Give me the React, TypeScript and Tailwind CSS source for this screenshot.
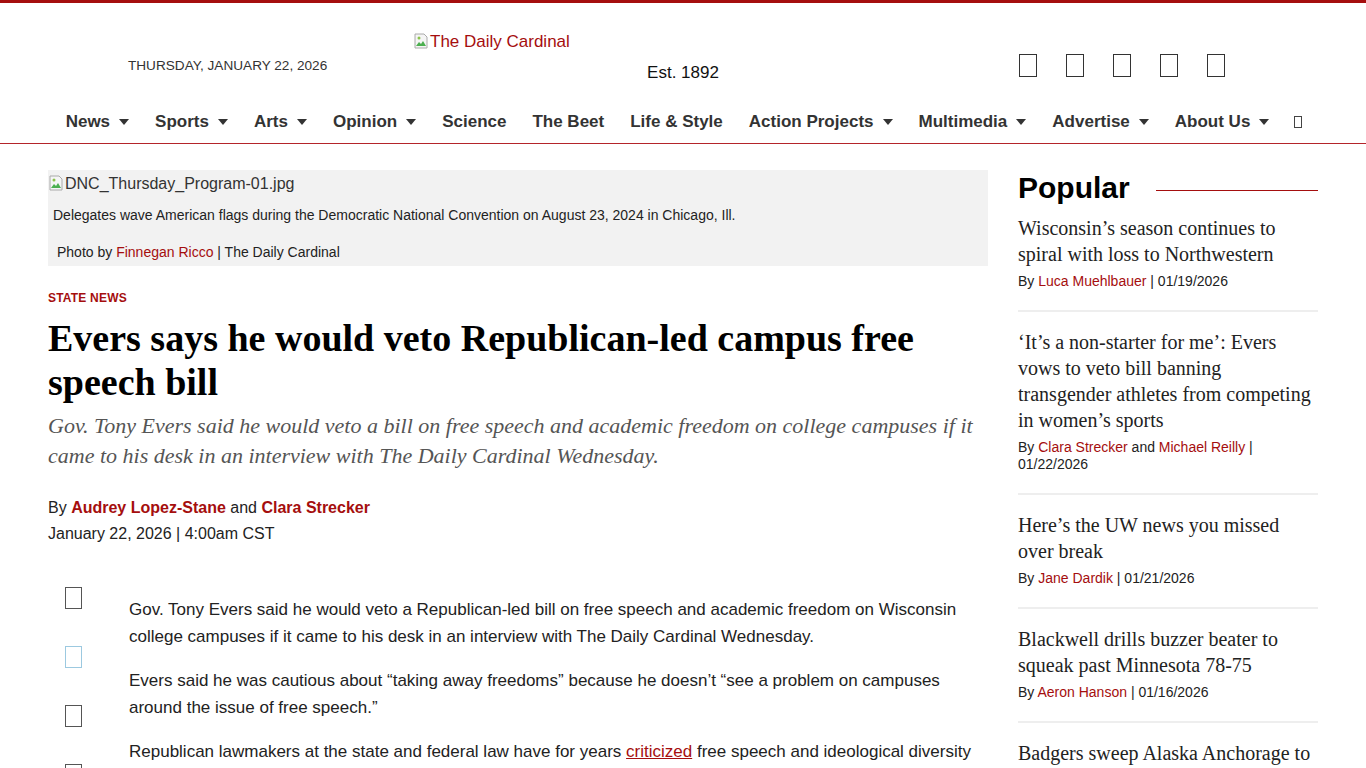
import React from 'react';

const navItems: { label: string; caret: boolean }[] = [
  { label: 'News', caret: true },
  { label: 'Sports', caret: true },
  { label: 'Arts', caret: true },
  { label: 'Opinion', caret: true },
  { label: 'Science', caret: false },
  { label: 'The Beet', caret: false },
  { label: 'Life & Style', caret: false },
  { label: 'Action Projects', caret: true },
  { label: 'Multimedia', caret: true },
  { label: 'Advertise', caret: true },
  { label: 'About Us', caret: true },
];

const popular = [
  {
    title: 'Wisconsin\u2019s season continues to spiral with loss to Northwestern',
    authors: ['Luca Muehlbauer'],
    date: '01/19/2026',
  },
  {
    title: '\u2018It\u2019s a non-starter for me\u2019: Evers vows to veto bill banning transgender athletes from competing in women\u2019s sports',
    authors: ['Clara Strecker', 'Michael Reilly'],
    date: '01/22/2026',
  },
  {
    title: 'Here\u2019s the UW news you missed over break',
    authors: ['Jane Dardik'],
    date: '01/21/2026',
  },
  {
    title: 'Blackwell drills buzzer beater to squeak past Minnesota 78-75',
    authors: ['Aeron Hanson'],
    date: '01/16/2026',
  },
  {
    title: 'Badgers sweep Alaska Anchorage to extend win streak',
    authors: ['Staff'],
    date: '01/18/2026',
  },
];

const serif = { fontFamily: '"Liberation Serif", "Times New Roman", serif' };

const BrokenImg = () => (
  <svg width="16" height="16" viewBox="0 0 16 16" className="inline-block align-[-2px] mr-[1px]">
    <path d="M2 1h9l3 3v11H2z" fill="#f5f5f5" stroke="#aaa" strokeWidth="1" />
    <path d="M3 13l3-4 2 2 2-3 3 5z" fill="#4caf50" />
    <circle cx="6" cy="5" r="1.5" fill="#8bc34a" />
  </svg>
);

const Tofu = ({ className }: { className: string }) => (
  <span className={`inline-block border ${className}`} />
);

export default function App() {
  return (
    <div className="bg-white min-h-screen text-[#222]" style={{ fontFamily: '"Liberation Sans", Arial, sans-serif' }}>
      <div className="h-[3px] bg-[#a50e0e]" />

      {/* masthead */}
      <header className="border-b border-[#b4242a]">
        <div className="w-[1270px] mx-auto flex h-[97px]">
          <div className="w-[365px] pl-[80px] pt-[53px] text-[13.6px] text-[#333] uppercase leading-[20px]">
            Thursday, January 22, 2026
          </div>
          <div className="w-[540px] pt-[29px] flex flex-col">
            <div className="text-[17px] leading-[20px] text-[#a50e0e]">
              <BrokenImg />The Daily Cardinal
            </div>
            <div className="mt-[11px] text-center text-[17px] leading-[20px] text-[#111]">Est. 1892</div>
          </div>
          <div className="flex-1 pl-[66px] pt-[51px] flex gap-[29px]">
            {[0, 1, 2, 3, 4].map((i) => (
              <Tofu key={i} className="w-[18px] h-[23px] border-[#333]" />
            ))}
          </div>
        </div>
        <nav className="h-[43px] flex items-center justify-center gap-[26px] pl-[2px]">
          {navItems.map((n) => (
            <span key={n.label} className="flex items-center text-[17px] font-bold text-[#333]">
              {n.label}
              {n.caret && (
                <svg width="10" height="6" viewBox="0 0 10 6" className="ml-[9px]">
                  <path d="M0 0h10L5 6z" fill="#333" />
                </svg>
              )}
            </span>
          ))}
          <Tofu className="w-[8px] h-[12px] border-[#444] ml-[-1px]" />
        </nav>
      </header>

      {/* content */}
      <main className="w-[1270px] mx-auto flex gap-[30px] pt-[26px]">
        <article className="w-[940px]">
          <figure className="bg-[#f2f2f2] pt-[2px] pb-[6px]">
            <div className="text-[16px] leading-[24px] text-[#333]">
              <BrokenImg />DNC_Thursday_Program-01.jpg
            </div>
            <figcaption className="pl-[5px] pt-[11px] text-[14px] leading-[16px] text-[#222]">
              Delegates wave American flags during the Democratic National Convention on August 23, 2024 in Chicago, Ill.
            </figcaption>
            <div className="pl-[9px] pt-[21px] text-[14px] leading-[16px] text-[#222]">
              Photo by <span className="text-[#a50e0e]">Finnegan Ricco</span> | The Daily Cardinal
            </div>
          </figure>

          <div className="mt-[25px] text-[12px] font-bold uppercase text-[#a50e0e] leading-[14px] tracking-[0.2px]">State News</div>
          <h1 className="mt-[11px] text-[38px] font-bold leading-[44px] text-black" style={serif}>
            Evers says he would veto Republican-led campus free speech bill
          </h1>
          <p className="mt-[7px] text-[22px] italic leading-[30px] text-[#555]" style={serif}>
            Gov. Tony Evers said he would veto a bill on free speech and academic freedom on college campuses if it came to his desk in an interview with The Daily Cardinal Wednesday.
          </p>

          <div className="mt-[24px] text-[16px] leading-[26px] text-[#222]">
            By <span className="font-bold text-[#a50e0e]">Audrey Lopez-Stane</span> and{' '}
            <span className="font-bold text-[#a50e0e]">Clara Strecker</span>
            <div>January 22, 2026 | 4:00am CST</div>
          </div>

          <div className="mt-[20px] flex">
            <div className="w-[81px] pl-[17px] pt-[20px] flex flex-col gap-[37px]">
              <Tofu className="w-[17px] h-[22px] border-[#555]" />
              <Tofu className="w-[17px] h-[22px] border-[#9cc9e0]" />
              <Tofu className="w-[17px] h-[22px] border-[#555]" />
              <Tofu className="w-[17px] h-[22px] border-[#555]" />
            </div>
            <div className="flex-1 pt-[29px] text-[17px] leading-[27px] text-[#222] pr-[10px]">
              <p>
                Gov. Tony Evers said he would veto a Republican-led bill on free speech and academic freedom on Wisconsin college campuses if it came to his desk in an interview with The Daily Cardinal Wednesday.
              </p>
              <p className="mt-[17px]">
                Evers said he was cautious about {'\u201C'}taking away freedoms{'\u201D'} because he doesn{'\u2019'}t {'\u201C'}see a problem on campuses around the issue of free speech.{'\u201D'}
              </p>
              <p className="mt-[17px]">
                Republican lawmakers at the state and federal law have for years{' '}
                <span className="text-[#a50e0e] underline">criticized</span> free speech and ideological diversity on college campuses across the country.
              </p>
            </div>
          </div>
        </article>

        <aside className="w-[300px]">
          <div className="flex items-center">
            <h2 className="text-[30px] font-bold leading-[36px] text-black">Popular</h2>
            <div className="flex-1 ml-[26px] mt-[4px] h-px bg-[#a50e0e]" />
          </div>
          <div className="mt-[9px]">
            {popular.map((p, i) => (
              <div key={i} className={i === 0 ? 'pb-[20px]' : 'border-t-2 border-[#eee] pt-[17px] pb-[20px]'}>
                <div className="text-[20px] leading-[26px] text-[#222]" style={serif}>
                  {p.title}
                </div>
                <div className="mt-[6px] text-[14px] leading-[17px] text-[#222]">
                  By{' '}
                  {p.authors.map((a, j) => (
                    <React.Fragment key={a}>
                      {j > 0 && ' and '}
                      <span className="text-[#a50e0e]">{a}</span>
                    </React.Fragment>
                  ))}{' '}
                  | {p.date}
                </div>
              </div>
            ))}
          </div>
        </aside>
      </main>
    </div>
  );
}
